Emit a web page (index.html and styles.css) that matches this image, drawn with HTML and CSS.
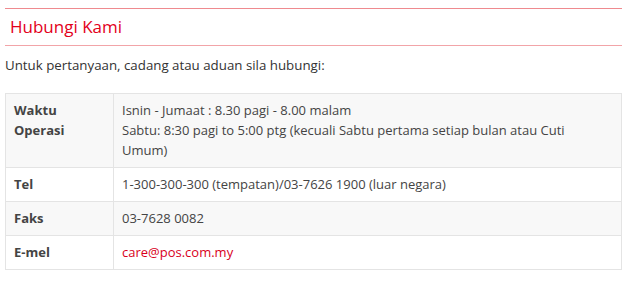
FILE: index.html
```html
<!DOCTYPE html>
<html>
<head>
<meta charset="utf-8">
<link rel="stylesheet" href="styles.css">
</head>
<body>
<div class="page">
  <h2 class="title">Hubungi Kami</h2>
  <p class="intro">Untuk pertanyaan, cadang atau aduan sila hubungi:</p>
  <table class="contact">
    <tr class="odd">
      <th>Waktu<br>Operasi</th>
      <td>Isnin - Jumaat : 8.30 pagi - 8.00 malam<br>Sabtu: 8:30 pagi to 5:00 ptg (kecuali Sabtu pertama setiap bulan atau Cuti Umum)</td>
    </tr>
    <tr>
      <th>Tel</th>
      <td>1-300-300-300 (tempatan)/03-7626 1900 (luar negara)</td>
    </tr>
    <tr class="odd">
      <th>Faks</th>
      <td>03-7628 0082</td>
    </tr>
    <tr>
      <th>E-mel</th>
      <td><a class="mail" href="#">care@pos.com.my</a></td>
    </tr>
  </table>
</div>
</body>
</html>
```
FILE: styles.css
```css
html, body {
  margin: 0;
  padding: 0;
  background: #fff;
}
.page {
  padding: 8px 18px 0 5px;
  font-family: "Open Sans", "Noto Sans", sans-serif;
  font-size: 13px;
  color: #333;
}
.title {
  margin: 0;
  border-top: 1px solid #ef8a8f;
  border-bottom: 1px solid #f2a4a8;
  height: 36px;
  line-height: 36px;
  padding-left: 5px;
  font-size: 17px;
  font-weight: normal;
  color: #e3001b;
}
.intro {
  margin: 10px 0 19px;
  line-height: 18px;
  font-size: 13.3px;
}
.contact {
  width: 100%;
  border-collapse: collapse;
  border: 1px solid #e4e4e4;
}
.contact th, .contact td {
  border: 1px solid #e4e4e4;
  padding: 6px 8px 7px;
  line-height: 20px;
  vertical-align: top;
  text-align: left;
}
.contact th {
  width: 91px;
  font-weight: bold;
  color: #444;
}
.contact td {
  color: #444;
}
.contact .odd {
  background: #f8f8f8;
}
.mail {
  color: #d9001b;
  text-decoration: none;
}
```
